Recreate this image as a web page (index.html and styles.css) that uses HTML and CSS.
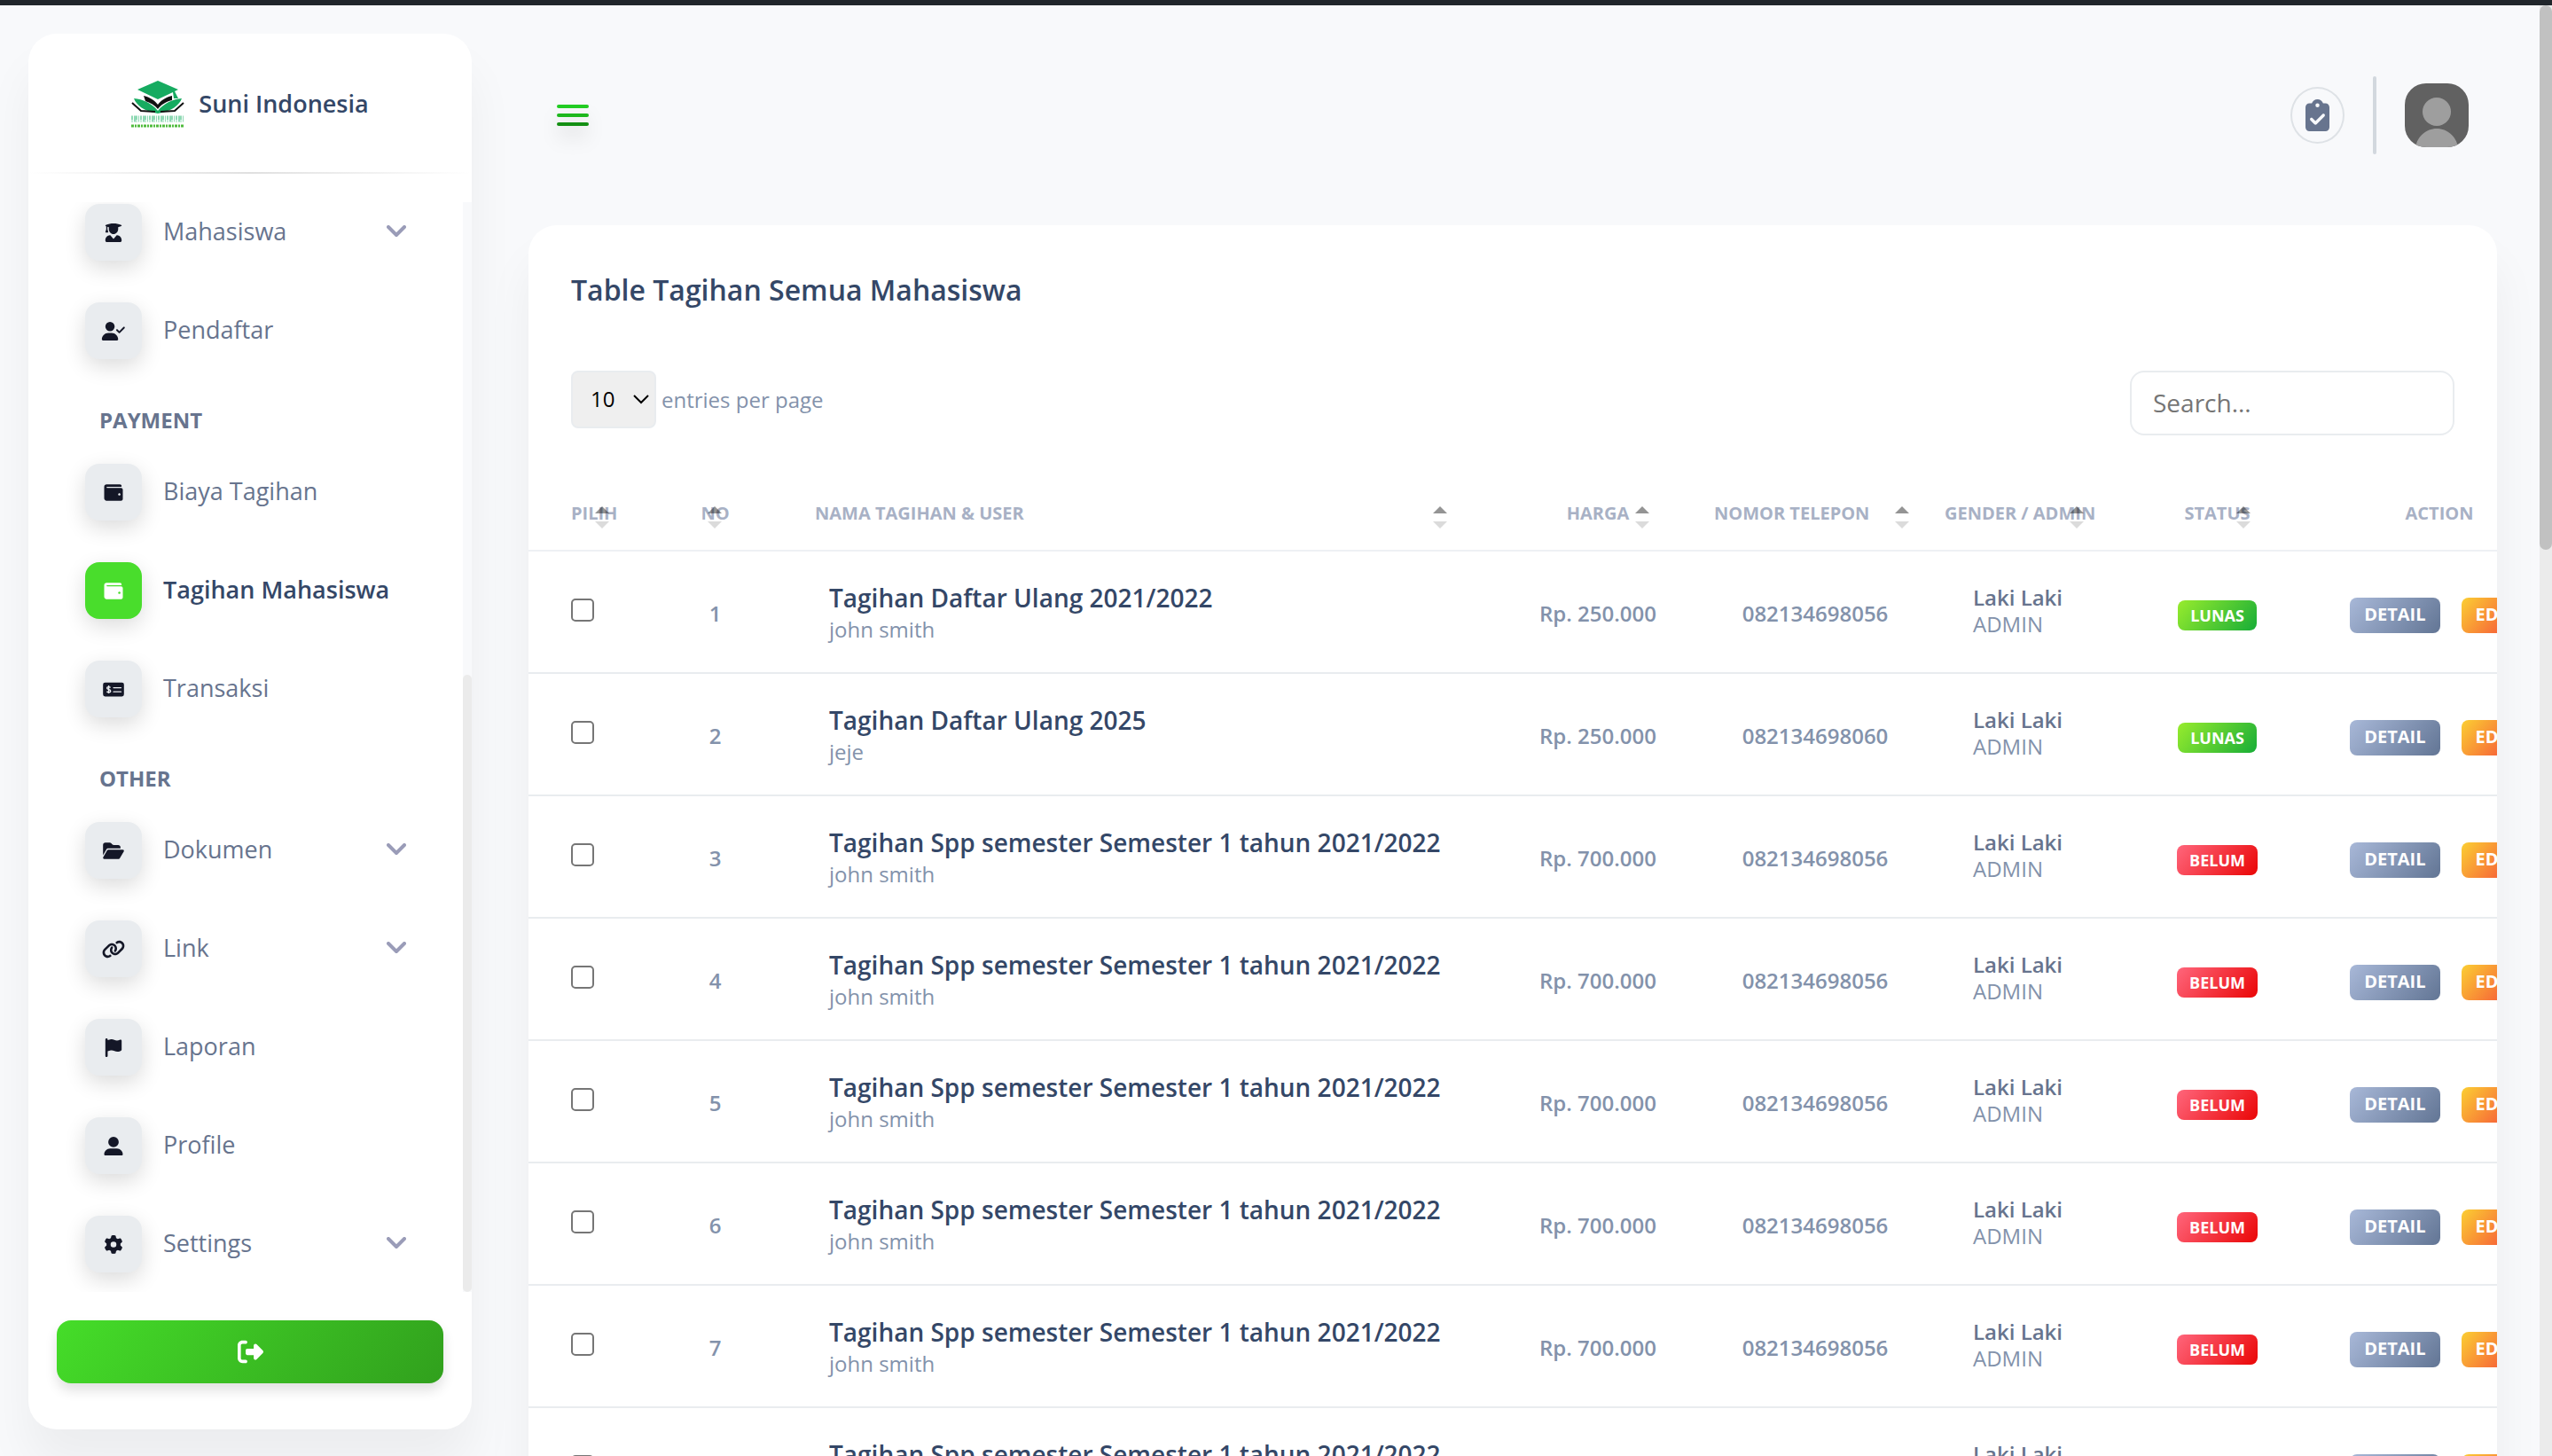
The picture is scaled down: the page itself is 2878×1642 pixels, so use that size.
FILE: index.html
```html
<!DOCTYPE html>
<html lang="id">
<head>
<meta charset="utf-8">
<title>Tagihan Mahasiswa - Suni Indonesia</title>
<meta name="viewport" content="width=device-width, initial-scale=1">
<link rel="stylesheet" href="styles.css">
</head>
<body>
<svg class="sprite" aria-hidden="true">
  <symbol id="wallet" viewBox="0 0 512 512"><path d="M461.2 128H80c-8.84 0-16-7.16-16-16s7.16-16 16-16h384c8.84 0 16-7.16 16-16 0-26.51-21.49-48-48-48H64C28.65 32 0 60.65 0 96v320c0 35.35 28.65 64 64 64h397.2c28.02 0 50.8-21.53 50.8-48V176c0-26.47-22.78-48-50.8-48zM416 336c-17.67 0-32-14.33-32-32s14.33-32 32-32 32 14.33 32 32-14.33 32-32 32z"/></symbol>
  <symbol id="graduate" viewBox="0 0 448 512"><path d="M12 44C80 16 150 0 224 0s144 16 212 44c16 7 16 25 0 32l-84 28v56c0 72-56 134-128 134S96 232 96 160v-56l-38-12v64l22 76c3 10-2 18-12 18H14c-10 0-15-8-12-18l22-76V82l-12-6c-16-7-16-25 0-32zM126 324c8 0 14 3 19 9l79 93 79-93c5-6 11-9 19-9 70 6 126 64 126 136v8c0 25-19 44-44 44H44c-25 0-44-19-44-44v-8c0-72 56-130 126-136z"/></symbol>
  <symbol id="user-check" viewBox="0 0 640 512"><path d="M224 256A128 128 0 1 0 224 0a128 128 0 1 0 0 256zm-45.7 48C79.8 304 0 383.8 0 482.3C0 498.7 13.3 512 29.7 512H418.3c16.4 0 29.7-13.3 29.7-29.7C448 383.8 368.2 304 269.7 304H178.3zM625 177L497 305c-9.4 9.4-24.6 9.4-33.9 0l-64-64c-9.4-9.4-9.4-24.6 0-33.9s24.6-9.4 33.9 0l47 47L591 143c9.4-9.4 24.6-9.4 33.9 0s9.4 24.6 0 33.9z"/></symbol>
  <symbol id="money" viewBox="0 0 576 512"><rect y="64" width="576" height="384" rx="56"/><path d="M204 206c-12-14-30-20-52-20-26 0-44 12-44 32 0 48 100 26 100 78 0 24-20 38-48 38-24 0-44-8-56-24M156 144v224" fill="none" stroke="#e9ecef" stroke-width="34"/><path d="M288 208h208M288 320h208" stroke="#e9ecef" stroke-width="30" stroke-linecap="round"/></symbol>
  <symbol id="folder" viewBox="0 0 576 512"><path d="M88.7 223.8L0 375.8V96C0 60.7 28.7 32 64 32H181.5c17 0 33.3 6.7 45.3 18.7l26.5 26.5c12 12 28.3 18.7 45.3 18.7H416c35.3 0 64 28.7 64 64v32H144c-22.8 0-43.8 12.1-55.3 31.8zm27.6 16.1C122.1 230 132.6 224 144 224H544c11.5 0 22 6.1 27.7 16.1s5.7 22.2-.1 32.1l-112 192C453.9 474 443.4 480 432 480H32c-11.5 0-22-6.1-27.7-16.1s-5.7-22.2 .1-32.1l112-192z"/></symbol>
  <symbol id="link" viewBox="0 0 640 512"><path d="M579.8 267.7c56.5-56.5 56.5-148 0-204.5c-50-50-128.8-56.5-186.3-15.4l-1.6 1.1c-14.4 10.3-17.7 30.3-7.4 44.6s30.3 17.7 44.6 7.4l1.6-1.1c32.1-22.9 76-19.3 103.8 8.6c31.5 31.5 31.5 82.5 0 114L422.3 334.8c-31.5 31.5-82.5 31.5-114 0c-27.9-27.9-31.5-71.8-8.6-103.8l1.1-1.6c10.3-14.4 6.9-34.4-7.4-44.6s-34.4-6.9-44.6 7.4l-1.1 1.6C206.5 251.2 213 330 263 380c56.5 56.5 148 56.5 204.5 0L579.8 267.7zM60.2 244.3c-56.5 56.5-56.5 148 0 204.5c50 50 128.8 56.5 186.3 15.4l1.6-1.1c14.4-10.3 17.7-30.3 7.4-44.6s-30.3-17.7-44.6-7.4l-1.6 1.1c-32.1 22.9-76 19.3-103.8-8.6C74 372 74 321 105.5 289.5L217.7 177.2c31.5-31.5 82.5-31.5 114 0c27.9 27.9 31.5 71.8 8.6 103.9l-1.1 1.6c-10.3 14.4-6.9 34.4 7.4 44.6s34.4 6.9 44.6-7.4l1.1-1.6C433.5 260.8 427 182 377 132c-56.5-56.5-148-56.5-204.5 0L60.2 244.3z"/></symbol>
  <symbol id="flag" viewBox="0 0 448 512"><path d="M64 32C64 14.3 49.7 0 32 0S0 14.3 0 32V64 368 480c0 17.7 14.3 32 32 32s32-14.3 32-32V352l64.3-16.1c41.1-10.3 84.6-5.5 122.5 13.4c44.2 22.1 95.5 24.8 141.7 7.4l34.7-13c12.5-4.7 20.8-16.6 20.8-30V66.1c0-23-24.2-38-44.8-27.7l-9.6 4.8c-46.3 23.2-100.8 23.2-147.1 0c-35.1-17.6-75.4-22-113.5-12.5L64 48V32z"/></symbol>
  <symbol id="user" viewBox="0 0 512 512"><path d="M256 288A144 144 0 1 0 256 0a144 144 0 1 0 0 288zm-94.7 32C72.2 320 0 392.2 0 481.3c0 17 13.8 30.7 30.7 30.7H481.3c17 0 30.7-13.8 30.7-30.7C512 392.2 439.8 320 350.7 320H161.3z"/></symbol>
  <symbol id="gear" viewBox="0 0 512 512"><path d="M495.9 166.6c3.2 8.7 .5 18.4-6.4 24.6l-43.3 39.4c1.1 8.3 1.7 16.8 1.7 25.4s-.6 17.1-1.7 25.4l43.3 39.4c6.9 6.2 9.6 15.9 6.4 24.6c-4.4 11.9-9.7 23.3-15.8 34.3l-4.7 8.1c-6.6 11-14 21.4-22.1 31.2c-5.9 7.2-15.7 9.6-24.5 6.8l-55.7-17.7c-13.4 10.3-28.2 18.9-44 25.4l-12.5 57.1c-2 9.1-9 16.3-18.2 17.8c-13.8 2.3-28 3.5-42.5 3.5s-28.7-1.2-42.5-3.5c-9.2-1.5-16.2-8.7-18.2-17.8l-12.5-57.1c-15.8-6.5-30.6-15.1-44-25.4L83.1 425.9c-8.8 2.8-18.6 .3-24.5-6.8c-8.1-9.8-15.5-20.2-22.1-31.2l-4.7-8.1c-6.1-11-11.4-22.4-15.8-34.3c-3.2-8.7-.5-18.4 6.4-24.6l43.3-39.4C64.6 273.1 64 264.6 64 256s.6-17.1 1.7-25.4L22.4 191.2c-6.9-6.2-9.6-15.9-6.4-24.6c4.4-11.9 9.7-23.3 15.8-34.3l4.7-8.1c6.6-11 14-21.4 22.1-31.2c5.9-7.2 15.7-9.6 24.5-6.8l55.7 17.7c13.4-10.3 28.2-18.9 44-25.4l12.5-57.1c2-9.1 9-16.3 18.2-17.8C227.3 1.2 241.5 0 256 0s28.7 1.2 42.5 3.5c9.2 1.5 16.2 8.7 18.2 17.8l12.5 57.1c15.8 6.5 30.6 15.1 44 25.4l55.7-17.7c8.8-2.8 18.6-.3 24.5 6.8c8.1 9.8 15.5 20.2 22.1 31.2l4.7 8.1c6.1 11 11.4 22.4 15.8 34.3zM256 336a80 80 0 1 0 0-160 80 80 0 1 0 0 160z"/></symbol>
  <symbol id="chevron" viewBox="0 0 22 14"><path d="M2 2l9 9 9-9" fill="none" stroke="currentColor" stroke-width="4" stroke-linecap="round" stroke-linejoin="round"/></symbol>
  <symbol id="logout" viewBox="0 0 512 512"><path d="M377.9 105.9L500.7 228.7c7.2 7.2 11.3 17.1 11.3 27.3s-4.1 20.1-11.3 27.3L377.9 406.1c-6.4 6.4-15 9.9-24 9.9c-18.7 0-33.9-15.2-33.9-33.9l0-62.1-128 0c-17.7 0-32-14.3-32-32l0-64c0-17.7 14.3-32 32-32l128 0 0-62.1c0-18.7 15.2-33.9 33.9-33.9c9 0 17.6 3.6 24 9.9zM160 96L96 96c-17.7 0-32 14.3-32 32l0 256c0 17.7 14.3 32 32 32l64 0c17.7 0 32 14.3 32 32s-14.3 32-32 32l-64 0c-53 0-96-43-96-96L0 128C0 75 43 32 96 32l64 0c17.7 0 32 14.3 32 32s-14.3 32-32 32z"/></symbol>
  <symbol id="clipboard" viewBox="0 0 384 512"><path d="M192 0c-41.8 0-77.4 26.7-90.5 64H64C28.7 64 0 92.7 0 128V448c0 35.3 28.7 64 64 64H320c35.3 0 64-28.7 64-64V128c0-35.3-28.7-64-64-64H282.5C269.4 26.7 233.8 0 192 0zm0 64a32 32 0 1 1 0 64 32 32 0 1 1 0-64zM305 273L177 401c-9.4 9.4-24.6 9.4-33.9 0L79 337c-9.4-9.4-9.4-24.6 0-33.9s24.6-9.4 33.9 0l47 47L271 239c9.4-9.4 24.6-9.4 33.9 0s9.4 24.6 0 33.9z"/></symbol>
</svg>
<div class="topline"></div>
<div class="app">
  <aside class="sidebar">
    <a class="brand" href="#">
      <svg class="logo" viewBox="0 0 60 60" aria-hidden="true">
        <path d="M30 5L53 15l-4 2 4 8h-5l-1-7L30 26 7 15z" fill="#16ab60"/>
        <path d="M3 25c10 1 20 5 27 14 7-9 17-13 27-14-3 8-11 14-27 17C14 39 6 33 3 25z" fill="#16ab60"/>
        <path d="M14 22c8 2 13 6 16 10 3-4 8-8 16-10v5c-8 2-13 6-16 10-3-4-8-7-14-9z" fill="#111"/>
        <path d="M1 30l10 9 16 1M59 30l-10 9-16 1" fill="none" stroke="#111" stroke-width="2"/>
        <path d="M0 48h60" stroke="#8fd9b4" stroke-width="7" stroke-dasharray="2 1 4 1 1 1"/>
        <path d="M0 50h60" stroke="#fff" stroke-width="1" stroke-dasharray="3 2"/>
        <path d="M0 56h60" stroke="#4fbb3c" stroke-width="3" stroke-dasharray="3 1 2 1"/>
      </svg>
      <span>Suni Indonesia</span>
    </a>
    <hr class="rule">
    <div class="scroller">
      <nav class="menu">
        <ul>
          <li><a href="#"><span class="tile"><svg><use href="#graduate"/></svg></span>Mahasiswa<svg class="chev"><use href="#chevron"/></svg></a></li>
          <li><a href="#"><span class="tile"><svg><use href="#user-check"/></svg></span>Pendaftar</a></li>
        </ul>
        <h2>PAYMENT</h2>
        <ul>
          <li><a href="#"><span class="tile"><svg><use href="#wallet"/></svg></span>Biaya Tagihan</a></li>
          <li><a class="active" href="#" aria-current="page"><span class="tile"><svg><use href="#wallet"/></svg></span>Tagihan Mahasiswa</a></li>
          <li><a href="#"><span class="tile"><svg><use href="#money"/></svg></span>Transaksi</a></li>
        </ul>
        <h2>OTHER</h2>
        <ul>
          <li><a href="#"><span class="tile"><svg><use href="#folder"/></svg></span>Dokumen<svg class="chev"><use href="#chevron"/></svg></a></li>
          <li><a href="#"><span class="tile"><svg><use href="#link"/></svg></span>Link<svg class="chev"><use href="#chevron"/></svg></a></li>
          <li><a href="#"><span class="tile"><svg><use href="#flag"/></svg></span>Laporan</a></li>
          <li><a href="#"><span class="tile"><svg><use href="#user"/></svg></span>Profile</a></li>
          <li><a href="#"><span class="tile"><svg><use href="#gear"/></svg></span>Settings<svg class="chev"><use href="#chevron"/></svg></a></li>
        </ul>
      </nav>
      <div class="track"><div class="thumb"></div></div>
    </div>
    <button class="logout" type="button" aria-label="Logout"><svg><use href="#logout"/></svg></button>
  </aside>

  <main class="main">
    <header class="topbar">
      <button class="burger" type="button" aria-label="Menu"><i></i><i></i><i></i></button>
      <div class="tools">
        <a class="round" href="#" aria-label="Tugas"><svg><use href="#clipboard"/></svg></a>
        <span class="divider"></span>
        <a class="avatar" href="#" aria-label="Profile"><svg viewBox="0 0 72 72"><rect width="72" height="72" fill="#616161"/><circle cx="36" cy="32" r="16" fill="#9e9e9e"/><path d="M12 72c2-12 12-21 24-21s22 9 24 21z" fill="#9e9e9e"/></svg></a>
      </div>
    </header>

    <section class="card">
      <h1>Table Tagihan Semua Mahasiswa</h1>
      <div class="controls">
        <label class="perpage"><span class="selectbox"><select><option>10</option></select><svg viewBox="0 0 18 11"><path d="M1 1l8 8 8-8" fill="none" stroke="#000" stroke-width="2"/></svg></span>entries per page</label>
        <input class="search" type="search" placeholder="Search..." aria-label="Search">
      </div>
      <div class="tablewrap">
        <table>
          <colgroup><col class="w-pick"><col class="w-no"><col><col class="w-price"><col class="w-phone"><col class="w-gender"><col class="w-status"><col class="w-action"></colgroup>
          <thead>
            <tr>
              <th class="pick"><button type="button">PILIH</button></th>
              <th class="no"><button type="button">NO</button></th>
              <th class="name"><button type="button">NAMA TAGIHAN &amp; USER</button></th>
              <th class="price"><button type="button">HARGA</button></th>
              <th class="phone"><button type="button">NOMOR TELEPON</button></th>
              <th class="gender"><button type="button">GENDER / ADMIN</button></th>
              <th class="status"><button type="button">STATUS</button></th>
              <th class="action">ACTION</th>
            </tr>
          </thead>
          <tbody>
            <tr><td class="pick"><input type="checkbox" aria-label="Pilih 1"></td><td class="no">1</td><td class="name"><b>Tagihan Daftar Ulang 2021/2022</b><span>john smith</span></td><td class="price">Rp. 250.000</td><td class="phone">082134698056</td><td class="gender"><b>Laki Laki</b><span>ADMIN</span></td><td class="status"><span class="badge paid">LUNAS</span></td><td class="action"><div class="acts"><button class="btn detail" type="button">DETAIL</button><button class="btn edit" type="button">EDIT</button></div></td></tr>
            <tr><td class="pick"><input type="checkbox" aria-label="Pilih 2"></td><td class="no">2</td><td class="name"><b>Tagihan Daftar Ulang 2025</b><span>jeje</span></td><td class="price">Rp. 250.000</td><td class="phone">082134698060</td><td class="gender"><b>Laki Laki</b><span>ADMIN</span></td><td class="status"><span class="badge paid">LUNAS</span></td><td class="action"><div class="acts"><button class="btn detail" type="button">DETAIL</button><button class="btn edit" type="button">EDIT</button></div></td></tr>
            <tr><td class="pick"><input type="checkbox" aria-label="Pilih 3"></td><td class="no">3</td><td class="name"><b>Tagihan Spp semester Semester 1 tahun 2021/2022</b><span>john smith</span></td><td class="price">Rp. 700.000</td><td class="phone">082134698056</td><td class="gender"><b>Laki Laki</b><span>ADMIN</span></td><td class="status"><span class="badge due">BELUM</span></td><td class="action"><div class="acts"><button class="btn detail" type="button">DETAIL</button><button class="btn edit" type="button">EDIT</button></div></td></tr>
            <tr><td class="pick"><input type="checkbox" aria-label="Pilih 4"></td><td class="no">4</td><td class="name"><b>Tagihan Spp semester Semester 1 tahun 2021/2022</b><span>john smith</span></td><td class="price">Rp. 700.000</td><td class="phone">082134698056</td><td class="gender"><b>Laki Laki</b><span>ADMIN</span></td><td class="status"><span class="badge due">BELUM</span></td><td class="action"><div class="acts"><button class="btn detail" type="button">DETAIL</button><button class="btn edit" type="button">EDIT</button></div></td></tr>
            <tr><td class="pick"><input type="checkbox" aria-label="Pilih 5"></td><td class="no">5</td><td class="name"><b>Tagihan Spp semester Semester 1 tahun 2021/2022</b><span>john smith</span></td><td class="price">Rp. 700.000</td><td class="phone">082134698056</td><td class="gender"><b>Laki Laki</b><span>ADMIN</span></td><td class="status"><span class="badge due">BELUM</span></td><td class="action"><div class="acts"><button class="btn detail" type="button">DETAIL</button><button class="btn edit" type="button">EDIT</button></div></td></tr>
            <tr><td class="pick"><input type="checkbox" aria-label="Pilih 6"></td><td class="no">6</td><td class="name"><b>Tagihan Spp semester Semester 1 tahun 2021/2022</b><span>john smith</span></td><td class="price">Rp. 700.000</td><td class="phone">082134698056</td><td class="gender"><b>Laki Laki</b><span>ADMIN</span></td><td class="status"><span class="badge due">BELUM</span></td><td class="action"><div class="acts"><button class="btn detail" type="button">DETAIL</button><button class="btn edit" type="button">EDIT</button></div></td></tr>
            <tr><td class="pick"><input type="checkbox" aria-label="Pilih 7"></td><td class="no">7</td><td class="name"><b>Tagihan Spp semester Semester 1 tahun 2021/2022</b><span>john smith</span></td><td class="price">Rp. 700.000</td><td class="phone">082134698056</td><td class="gender"><b>Laki Laki</b><span>ADMIN</span></td><td class="status"><span class="badge due">BELUM</span></td><td class="action"><div class="acts"><button class="btn detail" type="button">DETAIL</button><button class="btn edit" type="button">EDIT</button></div></td></tr>
            <tr><td class="pick"><input type="checkbox" aria-label="Pilih 8"></td><td class="no">8</td><td class="name"><b>Tagihan Spp semester Semester 1 tahun 2021/2022</b><span>john smith</span></td><td class="price">Rp. 700.000</td><td class="phone">082134698056</td><td class="gender"><b>Laki Laki</b><span>ADMIN</span></td><td class="status"><span class="badge due">BELUM</span></td><td class="action"><div class="acts"><button class="btn detail" type="button">DETAIL</button><button class="btn edit" type="button">EDIT</button></div></td></tr>
          </tbody>
        </table>
      </div>
    </section>
  </main>
  <div class="pagetrack"><div class="pagethumb"></div></div>
</div>
</body>
</html>
```
FILE: styles.css
```css
* { box-sizing: border-box; }

body {
  margin: 0;
  height: 100vh;
  display: flex;
  flex-direction: column;
  overflow: hidden;
  background: #f8f9fb;
  color: #67748e;
  font-family: "Open Sans", "Noto Sans", sans-serif;
  font-size: 24px;
}
button, input, select { font-family: inherit; margin: 0; }
button { border: 0; background: none; padding: 0; cursor: pointer; }
a { color: inherit; text-decoration: none; }
svg { display: block; fill: currentColor; }
.sprite { display: none; }

.topline { flex: none; height: 6px; background: #21262b; }
.app { flex: 1; min-height: 0; display: flex; }

/* Sidebar */
.sidebar {
  flex: none;
  width: 500px;
  margin: 32px 0 30px 32px;
  display: flex;
  flex-direction: column;
  background: #fff;
  border-radius: 32px;
  box-shadow: 0 40px 54px rgba(0, 0, 0, .05);
}
.brand {
  flex: none;
  height: 156px;
  display: flex;
  align-items: center;
  justify-content: center;
  gap: 16px;
  color: #344767;
  font-size: 27px;
  font-weight: 600;
}
.logo { width: 60px; height: 60px; }
.rule {
  flex: none;
  width: 100%;
  height: 2px;
  margin: 0 0 32px;
  border: 0;
  background: linear-gradient(90deg, transparent, #e0e0e0, transparent);
}
.scroller { flex: 1; min-height: 0; display: flex; overflow: hidden; }
.menu { flex: 1; padding: 2px 64px 0; }
.menu ul { list-style: none; margin: 0; padding: 0; display: grid; gap: 47px; }
.menu h2 {
  margin: 53px 0 33px 16px;
  font-size: 24px;
  line-height: 32px;
  font-weight: 700;
}
.menu a { display: flex; align-items: flex-start; gap: 24px; font-size: 27px; line-height: 62px; font-weight: 400; }
.menu .active { color: #344767; font-weight: 600; }
.tile {
  flex: none;
  width: 64px;
  height: 64px;
  display: grid;
  place-items: center;
  border-radius: 16px;
  background: #e9ecef;
  color: #141727;
  box-shadow: 0 8px 24px rgba(0, 0, 0, .14);
}
.tile svg { width: 28px; height: 21px; }
.active .tile { background: #49dd2c; color: #fff; }
.chev { width: 22px; height: 14px; margin: 24px 0 0 auto; color: #9a9cb8; }
.track { flex: none; width: 10px; background: #f8f9fb; display: flex; flex-direction: column; justify-content: flex-end; }
.thumb { height: 56.6%; border-radius: 5px; background: #ebebeb; }
.logout {
  flex: none;
  height: 71px;
  margin: 32px 32px 52px;
  display: grid;
  place-items: center;
  border-radius: 16px;
  background: linear-gradient(310deg, #31a01d, #45dd29);
  color: #fff;
  box-shadow: 0 8px 14px rgba(0, 0, 0, .12);
}
.logout svg { width: 29px; height: 29px; }

/* Main column */
.main { flex: 1; min-width: 0; padding: 0 48px 0 64px; overflow: hidden; }
.topbar { padding: 80px 32px; display: flex; align-items: center; justify-content: space-between; }
.burger { display: grid; gap: 6px; width: 36px; filter: drop-shadow(0 14px 10px rgba(0, 0, 0, .12)); }
.burger i { height: 4px; border-radius: 2px; background: #22cc22; }
.burger i:nth-child(2) { background: #1db81d; }
.burger i:nth-child(3) { background: #138f13; }
.tools { display: flex; align-items: center; gap: 32px; }
.round {
  width: 61px;
  height: 64px;
  display: grid;
  place-items: center;
  border: 2px solid #dee2e6;
  border-radius: 50%;
}
.round svg { width: 27px; height: 36px; }
.divider { width: 4px; height: 88px; border-radius: 2px; background: #d2d8de; }
.avatar { width: 72px; height: 72px; border-radius: 24px; overflow: hidden; }

.card {
  background: #fff;
  border-radius: 32px;
  box-shadow: 0 40px 54px rgba(0, 0, 0, .05);
}
.card h1 {
  margin: 0;
  padding: 47px 48px 65px;
  color: #344767;
  font-size: 32px;
  line-height: 52px;
  font-weight: 600;
}
.controls { display: flex; align-items: flex-start; justify-content: space-between; padding: 0 48px 46px; }
.perpage { display: flex; align-items: center; gap: 6px; color: #8392ab; line-height: 32px; }
.selectbox { display: grid; align-items: center; width: 96px; }
.selectbox > * { grid-area: 1 / 1; }
.selectbox svg { width: 18px; height: 11px; margin-right: 8px; justify-self: end; pointer-events: none; }
.perpage select {
  appearance: none;
  width: 96px;
  height: 65px;
  padding: 0 20px 2px;
  border: 2px solid #e9ecef;
  border-radius: 8px;
  background: #efefef;
  color: #000;
  font-size: 24px;
}
.search {
  width: 366px;
  height: 73px;
  padding: 0 24px 2px;
  border: 2px solid #e9ecef;
  border-radius: 16px;
  background: #fff;
  font-size: 28px;
  outline: 0;
}
.search::placeholder { color: #757575; }

/* Table */
.tablewrap { overflow: hidden; }
table { width: 100%; min-width: 2295px; table-layout: fixed; border-collapse: separate; border-spacing: 0; }
.w-pick { width: 130px; }
.w-no { width: 161px; }
.w-price { width: 198px; }
.w-phone { width: 260px; }
.w-gender { width: 229px; }
.w-status { width: 221px; }
.w-action { width: 280px; }
th {
  position: relative;
  height: 85px;
  padding: 0;
  border-bottom: 2px solid #eef1f4;
  color: #a8b1c5;
  font-size: 20px;
  line-height: 32px;
  font-weight: 700;
  white-space: nowrap;
  text-align: center;
}
th button { color: inherit; font-size: inherit; font-weight: inherit; line-height: inherit; }
th button::before, th button::after {
  content: "";
  position: absolute;
  right: var(--arrow);
  border: 8px solid transparent;
}
th button::before { top: 26px; border-bottom-color: rgba(0, 0, 0, .42); }
th button::after { top: 51px; border-top-color: rgba(0, 0, 0, .14); }
th.pick { --arrow: 39px; }
th.no { --arrow: 73px; }
th.name { --arrow: 71px; }
th.price { --arrow: 41px; }
th.phone { --arrow: 8px; }
th.gender { --arrow: 40px; }
th.status { --arrow: 73px; }
th.pick, td.pick { text-align: left; padding-left: 48px; }
th.name, th.phone, th.gender { text-align: left; padding-left: 32px; }

td {
  height: 138px;
  padding: 0;
  border-bottom: 2px solid #e9ecef;
  color: #8392ab;
  font-size: 24px;
  line-height: 30px;
  font-weight: 600;
  text-align: center;
  white-space: nowrap;
}
td.no, td.price, td.phone { padding-top: 4px; }
td.pick input {
  appearance: none;
  display: block;
  width: 26px;
  height: 26px;
  margin: 0 0 4px;
  border: 2px solid #767676;
  border-radius: 5px;
  background: #fff;
}
td.name, td.gender { text-align: left; padding-bottom: 2px; }
td.name { padding-left: 48px; }
td.phone { padding-left: 48px; padding-right: 16px; }
td.gender { padding-left: 64px; }
td.status { padding-top: 7px; }
td b, .name span, .gender span { display: block; }
td b { font-weight: 600; }
.name b { color: #344767; font-size: 28px; line-height: 42px; }
.gender b { color: #67748e; }
.name span, .gender span { font-weight: 400; }
.badge {
  display: inline-block;
  padding: 0 14px;
  border-radius: 8px;
  color: #fff;
  font-size: 18px;
  line-height: 34px;
  font-weight: 700;
}
.paid { background: linear-gradient(310deg, #17ad37, #98ec2d); }
.due { background: linear-gradient(310deg, #ea0606, #ff667c); }
.acts { display: flex; justify-content: center; gap: 24px; padding-top: 8px; }
.btn {
  padding: 0 16px 2px;
  border-radius: 8px;
  color: #fff;
  font-size: 20px;
  line-height: 38px;
  font-weight: 700;
}
.detail { background: linear-gradient(310deg, #627594, #a8b8d8); }
.edit { background: linear-gradient(310deg, #f53939, #fbcf33); }

/* Page scrollbar */
.pagetrack { flex: none; width: 14px; background: #ebebeb; }
.pagethumb { height: 614px; border-radius: 7px; background: #c1c1c1; }
```
